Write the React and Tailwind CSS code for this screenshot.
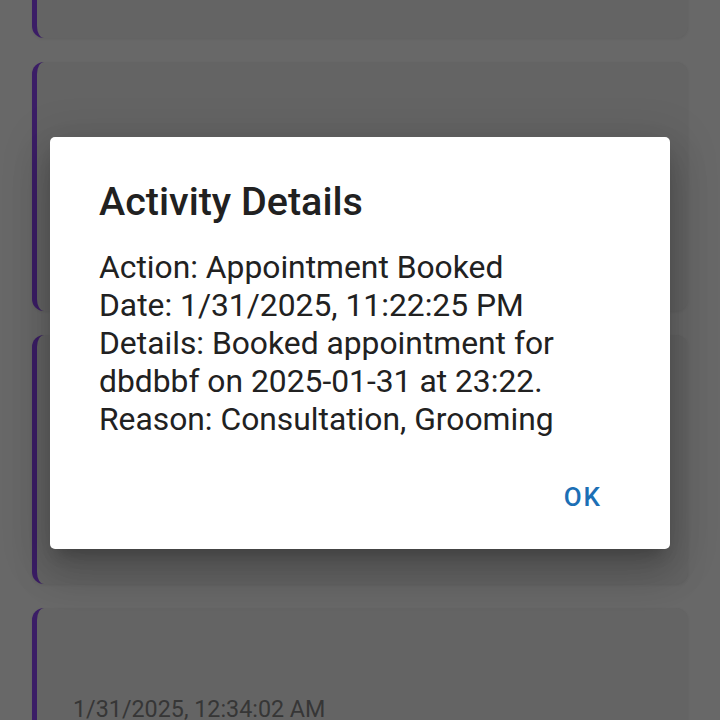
import React from "react";

function Card({ date }) {
  return (
    <div className="h-[249px] shrink-0 rounded-[12px] border-l-[5px] border-[#3b1d66] bg-[#646464] shadow-[0_1px_3px_rgba(0,0,0,0.08)] flex flex-col pl-[36px] pr-[24px] pt-[84px] pb-[31px]">
      <div className="h-[34.5px] text-[23.3px] leading-[34.5px] text-[#363636]">{date}</div>
      <div className="mt-auto h-[34.5px] text-[23px] leading-[34.5px] text-[#363636]">
        <span className="ml-[459px]">,</span>
      </div>
    </div>
  );
}

export default function App() {
  return (
    <div
      className="relative w-[720px] h-[720px] overflow-hidden bg-[#686868]"
      style={{ fontFamily: "Roboto, 'Noto Sans', sans-serif" }}
    >
      <div className="flex flex-col gap-[24px] px-[32px] -mt-[211px]">
        <Card date="" />
        <Card date="" />
        <Card date="" />
        <Card date="1/31/2025, 12:34:02 AM" />
      </div>

      <div className="absolute left-[50px] top-[137px] w-[620px] rounded-[5px] bg-white shadow-[0_11px_15px_-7px_rgba(0,0,0,0.2),0_24px_38px_3px_rgba(0,0,0,0.14),0_9px_46px_8px_rgba(0,0,0,0.12)]">
        <div className="pl-[49px] pr-[30px] pt-[42px]">
          <h2 className="text-[39.5px] leading-[46px] font-medium text-[#212121]">Activity Details</h2>
          <div className="mt-[23px] text-[31.8px] leading-[38px] text-[#212121]">
            <div>Action: Appointment Booked</div>
            <div>Date: 1/31/2025, 11:22:25 PM</div>
            <div>Details: Booked appointment for dbdbbf on 2025-01-31 at 23:22.</div>
            <div>Reason: Consultation, Grooming</div>
          </div>
        </div>
        <div className="flex justify-end pr-[68px] mt-[41px] pb-[34px]">
          <button className="text-[26px] leading-[36px] font-medium tracking-[2px] text-[#1c6fb5]">OK</button>
        </div>
      </div>
    </div>
  );
}
